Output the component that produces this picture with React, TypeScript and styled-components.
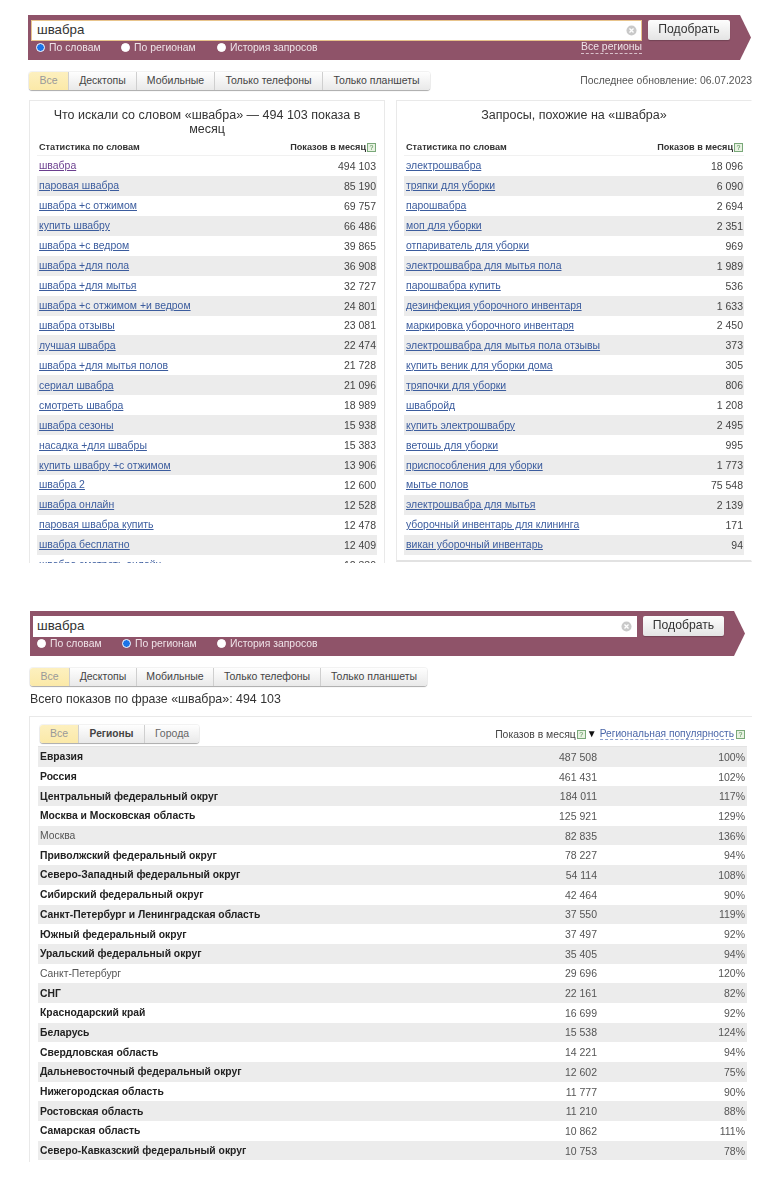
import React from 'react';
import styled, { createGlobalStyle } from 'styled-components';

const Global = createGlobalStyle`
  html, body { margin: 0; padding: 0; background: #fff; }
  body { font-family: "Liberation Sans", Arial, sans-serif; color: #333; }
`;

const Page = styled.div`
  width: 780px;
  height: 1200px;
  overflow: hidden;
  box-sizing: border-box;
  padding-top: 15px;
  filter: blur(0.4px);
`;

const Section = styled.section<{ $left: number; $height: number }>`
  height: ${p => p.$height}px;
  padding-left: ${p => p.$left}px;
`;

const Banner = styled.div<{ $width: number; $inset: number }>`
  box-sizing: border-box;
  width: ${p => p.$width}px;
  height: 45px;
  padding: 5px 0 0 ${p => p.$inset}px;
  background: #8f5369;
  clip-path: polygon(0 0, calc(100% - 11px) 0, 100% 50%, calc(100% - 11px) 100%, 0 100%);
  display: flex;
  align-items: flex-start;
  gap: 6px;
`;

const SearchColumn = styled.div<{ $width: number }>`
  width: ${p => p.$width}px;
`;

const InputBox = styled.div<{ $focus?: boolean }>`
  box-sizing: border-box;
  height: 21px;
  background: #fff;
  display: flex;
  align-items: center;
  justify-content: space-between;
  padding: 0 5px 2px ${p => (p.$focus ? 6 : 4)}px;
  font-size: 13.3px;
  color: #333;
  box-shadow: ${p => (p.$focus ? 'inset 0 0 0 1px #e8c48c' : 'none')};
`;

const ClearIcon = styled.svg`
  width: 11px;
  height: 11px;
  flex: none;
  margin-top: 2px;
`;

const Options = styled.div<{ $pad: number }>`
  display: flex;
  align-items: center;
  height: 13px;
  padding-left: ${p => p.$pad}px;
  font-size: 10.4px;
  color: #efe3e8;
`;

const Option = styled.div<{ $width: number }>`
  width: ${p => p.$width}px;
  display: flex;
  align-items: center;
  gap: 2px;
`;

const Radio = styled.span<{ $on?: boolean }>`
  box-sizing: border-box;
  width: 9px;
  height: 9px;
  border-radius: 50%;
  background: ${p => (p.$on ? '#1a73e8' : '#fff')};
  border: 1px solid #fff;
  margin-right: 2px;
`;

const AllRegions = styled.span`
  margin-left: auto;
  border-bottom: 1px dashed #d8c0ca;
  line-height: 12px;
`;

const GoButton = styled.div<{ $width: number }>`
  box-sizing: border-box;
  width: ${p => p.$width}px;
  height: 20px;
  background: linear-gradient(#fdfdfd, #e4e4e4);
  border-radius: 2px;
  font-size: 12.2px;
  color: #333;
  text-align: center;
  line-height: 19px;
  box-shadow: 0 1px 1px rgba(0, 0, 0, 0.2);
`;

const TabBar = styled.div<{ $top: number }>`
  display: flex;
  align-items: center;
  justify-content: space-between;
  margin-top: ${p => p.$top}px;
  width: 724px;
`;

const Tabs = styled.div<{ $shift?: number }>`
  display: inline-flex;
  height: 18px;
  margin-left: ${p => p.$shift || 0}px;
  border-radius: 3px;
  box-shadow: 0 1px 1px rgba(0, 0, 0, 0.3), 0 0 0 1px rgba(0, 0, 0, 0.05);
  overflow: hidden;
`;

const Tab = styled.div<{ $width: number; $active?: boolean; $bold?: boolean; $dim?: boolean }>`
  box-sizing: border-box;
  width: ${p => p.$width}px;
  text-align: center;
  font-size: ${p => (p.$bold ? 10.2 : 10.5)}px;
  line-height: 17px;
  font-weight: ${p => (p.$bold ? 700 : 400)};
  color: ${p => (p.$active ? '#999' : p.$dim ? '#666' : '#444')};
  background: ${p => (p.$active ? 'linear-gradient(#fdf0bf, #fbe9a8)' : 'linear-gradient(#fefefe, #e9e9e9)')};
  border-left: 1px solid ${p => (p.$active ? 'transparent' : '#cfcfcf')};
  &:first-child { border-left: 0; }
`;

const Updated = styled.div`
  font-size: 10.4px;
  line-height: 18px;
  height: 18px;
  color: #555;
`;

const Panels = styled.div`
  display: flex;
  gap: 11px;
  margin: 10px 0 0 1px;
  width: 723px;
`;

const Panel = styled.div<{ $shadow?: boolean }>`
  box-sizing: border-box;
  width: 356px;
  height: ${p => (p.$shadow ? 462 : 463)}px;
  overflow: hidden;
  border-top: 1px solid #e9e9e9;
  border-left: 1px solid #e9e9e9;
  border-right: 1px solid ${p => (p.$shadow ? 'transparent' : '#e9e9e9')};
  border-bottom: ${p => (p.$shadow ? '2px solid #e2e2e2' : '0')};
  padding: 0 7px;
`;

const PanelTitle = styled.h2`
  box-sizing: border-box;
  height: 37px;
  margin: 0;
  padding: 7px 8px 0;
  font-size: 12.5px;
  line-height: 14px;
  font-weight: 400;
  text-align: center;
  color: #333;
`;

const ListHead = styled.div`
  box-sizing: border-box;
  display: flex;
  justify-content: space-between;
  align-items: center;
  height: 18px;
  font-size: 9.15px;
  font-weight: 700;
  color: #333;
  border-bottom: 1px solid #f1f1f1;
  padding: 0 1px 0 2px;
`;

const Help = styled.span`
  display: inline-block;
  box-sizing: border-box;
  width: 9px;
  height: 9px;
  margin-left: 1px;
  border: 1px solid #79a879;
  background: #e8f2e2;
  color: #4d8a4d;
  font-size: 7px;
  line-height: 7px;
  font-weight: 400;
  text-align: center;
`;

const Row = styled.div`
  display: flex;
  justify-content: space-between;
  align-items: center;
  height: 19.94px;
  padding: 0 1px 0 2px;
  font-size: 10.45px;
`;

const StripedList = styled.div<{ $odd?: boolean }>`
  & > div:nth-child(${p => (p.$odd ? 'odd' : 'even')}) { background: #ececec; }
`;

const KeyLink = styled.a<{ $visited?: boolean }>`
  color: ${p => (p.$visited ? '#6b3f8f' : '#3b5c9e')};
  text-decoration: underline;
`;

const Num = styled.span`
  font-size: 10.5px;
  color: #444;
`;

const Total = styled.div`
  margin-top: 6px;
  font-size: 12.4px;
  line-height: 15px;
  color: #333;
`;

const RegionPanel = styled.div`
  box-sizing: border-box;
  width: 723px;
  height: 446px;
  margin-top: 9px;
  margin-left: -1px;
  overflow: hidden;
  border-top: 1px solid #e9e9e9;
  border-left: 1px solid #e9e9e9;
  padding-left: 8px;
`;

const RegionHead = styled.div`
  display: flex;
  align-items: center;
  height: 30px;
  width: 709px;
  padding: 5px 2px 0 2px;
  box-sizing: border-box;
  font-size: 10.4px;
  color: #444;
  border-bottom: 1px solid #e3e3e3;
`;

const ShowsHead = styled.span`
  margin-left: auto;
  display: inline-flex;
  align-items: center;
`;

const SortMark = styled.span`
  color: #111;
  font-size: 10px;
  line-height: 10px;
  margin: 0 3px 0 1px;
`;

const PopLink = styled.span`
  color: #4a66a8;
  font-size: 10.2px;
  border-bottom: 1px dashed #8b9ecb;
  line-height: 11px;
  margin-right: 1px;
`;

const RegionRow = styled.div`
  display: grid;
  grid-template-columns: 1fr 80px 148px;
  align-items: center;
  height: 19.7px;
  width: 709px;
  box-sizing: border-box;
  padding: 0 2px;
  font-size: 10.5px;
  color: #555;
  text-align: right;
`;

const RegionName = styled.span<{ $plain?: boolean }>`
  text-align: left;
  font-size: 10.35px;
  font-weight: ${p => (p.$plain ? 400 : 700)};
  color: ${p => (p.$plain ? '#555' : '#222')};
`;

const left: [string, string][] = [
  ['швабра', '494 103'], ['паровая швабра', '85 190'], ['швабра +с отжимом', '69 757'], ['купить швабру', '66 486'],
  ['швабра +с ведром', '39 865'], ['швабра +для пола', '36 908'], ['швабра +для мытья', '32 727'],
  ['швабра +с отжимом +и ведром', '24 801'], ['швабра отзывы', '23 081'], ['лучшая швабра', '22 474'],
  ['швабра +для мытья полов', '21 728'], ['сериал швабра', '21 096'], ['смотреть швабра', '18 989'],
  ['швабра сезоны', '15 938'], ['насадка +для швабры', '15 383'], ['купить швабру +с отжимом', '13 906'],
  ['швабра 2', '12 600'], ['швабра онлайн', '12 528'], ['паровая швабра купить', '12 478'],
  ['швабра бесплатно', '12 409'], ['швабра смотреть онлайн', '12 330'],
];
const right: [string, string][] = [
  ['электрошвабра', '18 096'], ['тряпки для уборки', '6 090'], ['парошвабра', '2 694'], ['моп для уборки', '2 351'],
  ['отпариватель для уборки', '969'], ['электрошвабра для мытья пола', '1 989'], ['парошвабра купить', '536'],
  ['дезинфекция уборочного инвентаря', '1 633'], ['маркировка уборочного инвентаря', '2 450'],
  ['электрошвабра для мытья пола отзывы', '373'], ['купить веник для уборки дома', '305'],
  ['тряпочки для уборки', '806'], ['швабройд', '1 208'], ['купить электрошвабру', '2 495'],
  ['ветошь для уборки', '995'], ['приспособления для уборки', '1 773'], ['мытье полов', '75 548'],
  ['электрошвабра для мытья', '2 139'], ['уборочный инвентарь для клининга', '171'], ['викан уборочный инвентарь', '94'],
];
const regions: [string, string, string, boolean?][] = [
  ['Евразия', '487 508', '100%'], ['Россия', '461 431', '102%'], ['Центральный федеральный округ', '184 011', '117%'],
  ['Москва и Московская область', '125 921', '129%'], ['Москва', '82 835', '136%', true],
  ['Приволжский федеральный округ', '78 227', '94%'], ['Северо-Западный федеральный округ', '54 114', '108%'],
  ['Сибирский федеральный округ', '42 464', '90%'], ['Санкт-Петербург и Ленинградская область', '37 550', '119%'],
  ['Южный федеральный округ', '37 497', '92%'], ['Уральский федеральный округ', '35 405', '94%'],
  ['Санкт-Петербург', '29 696', '120%', true], ['СНГ', '22 161', '82%'], ['Краснодарский край', '16 699', '92%'],
  ['Беларусь', '15 538', '124%'], ['Свердловская область', '14 221', '94%'],
  ['Дальневосточный федеральный округ', '12 602', '75%'], ['Нижегородская область', '11 777', '90%'],
  ['Ростовская область', '11 210', '88%'], ['Самарская область', '10 862', '111%'],
  ['Северо-Кавказский федеральный округ', '10 753', '78%'],
];

const Clear = () => (
  <ClearIcon viewBox="0 0 12 12">
    <circle cx="6" cy="6" r="5.5" fill="#c9c9c9" />
    <path d="M3.8 3.8l4.4 4.4M8.2 3.8l-4.4 4.4" stroke="#fff" strokeWidth="1.5" />
  </ClearIcon>
);

const tabNames = ['Все', 'Десктопы', 'Мобильные', 'Только телефоны', 'Только планшеты'];

type SearchProps = {
  width: number; inset: number; column: number; button: number; focus?: boolean;
  selected: number; regionsLink?: boolean; widths: number[]; pad: number;
};
const Search = ({ width, inset, column, button, focus, selected, regionsLink, widths, pad }: SearchProps) => (
  <Banner $width={width} $inset={inset}>
    <SearchColumn $width={column}>
      <InputBox $focus={focus}>швабра<Clear /></InputBox>
      <Options $pad={pad}>
        {['По словам', 'По регионам', 'История запросов'].map((o, i) => (
          <Option key={o} $width={widths[i]}><Radio $on={i === selected} />{o}</Option>
        ))}
        {regionsLink && <AllRegions>Все регионы</AllRegions>}
      </Options>
    </SearchColumn>
    <GoButton $width={button}>Подобрать</GoButton>
  </Banner>
);

const KeywordPanel = ({ title, rows, shadow }: { title: string; rows: [string, string][]; shadow?: boolean }) => (
  <Panel $shadow={shadow}>
    <PanelTitle>{title}</PanelTitle>
    <ListHead><span>Статистика по словам</span><span>Показов в месяц<Help>?</Help></span></ListHead>
    <StripedList>
      {rows.map(([k, n], i) => (
        <Row key={k}>
          <KeyLink $visited={!shadow && i === 0}>{k}</KeyLink>
          <Num>{n}</Num>
        </Row>
      ))}
    </StripedList>
  </Panel>
);

export default function App() {
  return (
    <Page>
      <Global />
      <Section $left={28} $height={596}>
        <Search width={723} inset={3} column={611} button={82} focus selected={0} regionsLink widths={[85, 96, 150]} pad={5} />
        <TabBar $top={12}>
          <Tabs $shift={1}>
            {tabNames.map((t, i) => (
              <Tab key={t} $active={i === 0} $width={[39, 68, 78, 108, 108][i]}>{t}</Tab>
            ))}
          </Tabs>
          <Updated>Последнее обновление: 06.07.2023</Updated>
        </TabBar>
        <Panels>
          <KeywordPanel title="Что искали со словом «швабра» — 494 103 показа в месяц" rows={left} />
          <KeywordPanel title="Запросы, похожие на «швабра»" rows={right} shadow />
        </Panels>
      </Section>
      <Section $left={30} $height={560}>
        <Search width={715} inset={3} column={604} button={81} selected={1} widths={[85, 95, 150]} pad={4} />
        <TabBar $top={12}>
          <Tabs>
            {tabNames.map((t, i) => (
              <Tab key={t} $active={i === 0} $width={[39, 67, 77, 107, 107][i]}>{t}</Tab>
            ))}
          </Tabs>
        </TabBar>
        <Total>Всего показов по фразе «швабра»: 494 103</Total>
        <RegionPanel>
          <RegionHead>
            <Tabs>
              <Tab $active $width={38}>Все</Tab>
              <Tab $bold $width={66}>Регионы</Tab>
              <Tab $dim $width={55}>Города</Tab>
            </Tabs>
            <ShowsHead>Показов в месяц<Help>?</Help><SortMark>▼</SortMark></ShowsHead>
            <PopLink>Региональная популярность</PopLink><Help>?</Help>
          </RegionHead>
          <StripedList $odd>
            {regions.map(([n, c, p, plain]) => (
              <RegionRow key={n}>
                <RegionName $plain={plain}>{n}</RegionName>
                <span>{c}</span>
                <span>{p}</span>
              </RegionRow>
            ))}
          </StripedList>
        </RegionPanel>
      </Section>
    </Page>
  );
}
